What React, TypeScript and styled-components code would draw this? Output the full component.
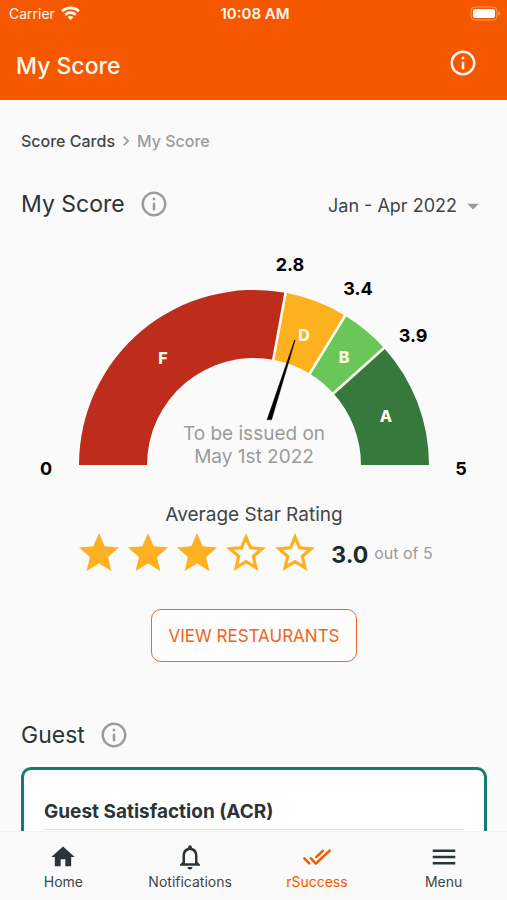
import React from "react";
import styled, { createGlobalStyle } from "styled-components";
import {
  MdArrowDropDown,
  MdChevronRight,
  MdHome,
  MdMenu,
  MdOutlineInfo,
  MdOutlineNotifications,
  MdStar,
  MdStarBorder,
} from "react-icons/md";

const color = {
  orange: "#f55800",
  ink: "#2b3437",
  text: "#3f4649",
  muted: "#9b9b9b",
  page: "#fafafa",
  teal: "#137e70",
  amber: "#fdb022",
};

const GlobalStyle = createGlobalStyle`
  *, *::before, *::after { box-sizing: border-box; }
  body {
    margin: 0;
    background: ${color.page};
    color: ${color.ink};
    font-family: Inter, Roboto, sans-serif;
  }
  h1, h2, h3, p, ol, ul { margin: 0; padding: 0; font-weight: 400; }
  button, select { font: inherit; color: inherit; }
`;

const Screen = styled.div`
  display: flex;
  flex-direction: column;
  height: 100vh;
`;

const Header = styled.header`
  flex: none;
  background: ${color.orange};
  color: #fff8f0;
`;

const StatusBar = styled.div`
  display: grid;
  grid-template-columns: 1fr auto 1fr;
  align-items: center;
  height: 26px;
  padding: 0 6px 0 9px;
  font-size: 15px;
`;

const Carrier = styled.span`
  display: flex;
  align-items: center;
  gap: 6px;
  font-size: 14px;
`;

const Clock = styled.span`
  font-weight: 600;
`;

const Battery = styled.svg`
  justify-self: end;
`;

const TitleBar = styled.div`
  display: flex;
  align-items: center;
  justify-content: space-between;
  height: 74px;
  padding: 0 29px 0 16px;
`;

const Title = styled.h1`
  font-size: 23px;
  line-height: 32px;
  font-weight: 500;
  padding-top: 6px;
`;

const IconButton = styled.button<{ $tone?: string }>`
  display: flex;
  padding: 0;
  border: 0;
  background: none;
  font-size: 30px;
  color: ${(p) => p.$tone ?? "inherit"};
`;

const Content = styled.main`
  flex: 1;
  min-height: 0;
  overflow-y: auto;
  scrollbar-width: none;
  padding: 29px 20px 0 21px;
`;

const Breadcrumbs = styled.nav`
  display: flex;
  align-items: center;
  gap: 1px;
  font-size: 16px;
  line-height: 24px;
  font-weight: 500;
  color: ${color.muted};
`;

const CrumbLink = styled.a`
  color: ${color.text};
  text-decoration: none;
`;

const SectionHead = styled.div<{ $top: number }>`
  display: flex;
  align-items: center;
  justify-content: space-between;
  margin-top: ${(p) => p.$top}px;
`;

const Heading = styled.div`
  display: flex;
  align-items: center;
  gap: 14px;
`;

const SectionTitle = styled.h2`
  font-size: 23px;
  line-height: 32px;
`;

const Period = styled.div`
  display: flex;
  align-items: center;
  padding-top: 4px;
  svg { pointer-events: none; margin-left: -24px; color: ${color.muted}; }
`;

const PeriodSelect = styled.select`
  appearance: none;
  border: 0;
  background: none;
  field-sizing: content;
  padding: 0 26px 0 0;
  font-size: 18px;
  line-height: 24px;
  color: ${color.text};
`;

const GaugeSvg = styled.svg`
  display: block;
  width: 100%;
  margin-top: 30px;
  text-anchor: middle;
`;

const Grade = styled.text`
  font-size: 16px;
  font-weight: 800;
  fill: #fffbe8;
`;

const Mark = styled.text`
  font-size: 18px;
  font-weight: 700;
  fill: #000;
`;

const Note = styled.text`
  font-size: 19px;
  fill: ${color.muted};
`;

const Rating = styled.section`
  display: flex;
  flex-direction: column;
  align-items: center;
  margin-top: 23px;
`;

const RatingTitle = styled.h3`
  font-size: 19px;
  line-height: 24px;
  color: ${color.text};
`;

const RatingRow = styled.div`
  display: flex;
  align-items: center;
  margin-top: 2px;
`;

const Stars = styled.span`
  display: flex;
  gap: 1px;
  font-size: 48px;
  color: ${color.amber};
`;

const Score = styled.strong`
  margin: 4px 6px 0 12px;
  font-size: 23px;
  line-height: 32px;
  font-weight: 700;
  color: #1e2a2c;
`;

const OutOf = styled.span`
  font-size: 16px;
  color: ${color.muted};
`;

const OutlineButton = styled.button`
  margin-top: 32px;
  padding: 0 16px;
  height: 53px;
  border: 1px solid #f2652a;
  border-radius: 10px;
  background: #fdfdfd;
  font-size: 17px;
  color: #ee6420;
`;

const Card = styled.section`
  margin-top: 16px;
  padding: 30px 20px 24px;
  border: 3px solid ${color.teal};
  border-radius: 10px;
  background: #fff;
`;

const CardTitle = styled.h3`
  padding-bottom: 5px;
  border-bottom: 1px solid #dfe3e3;
  font-size: 19px;
  line-height: 24px;
  font-weight: 700;
`;

const TabBar = styled.nav`
  flex: none;
  display: grid;
  grid-template-columns: repeat(4, 1fr);
  height: 69px;
  border-top: 1px solid #f3f3f3;
  background: ${color.page};
`;

const Tab = styled.a<{ $active?: boolean }>`
  display: flex;
  flex-direction: column;
  align-items: center;
  padding-top: 10px;
  font-size: 14px;
  line-height: 20px;
  text-decoration: none;
  color: ${(p) => (p.$active ? color.orange : color.text)};
`;

const TabIcon = styled.span<{ $active?: boolean }>`
  display: flex;
  align-items: center;
  height: 30px;
  color: ${(p) => (p.$active ? color.orange : color.ink)};
`;

const WifiIcon = () => (
  <svg width="19" height="15" viewBox="0 0 19 15" fill="none" stroke="currentColor" strokeWidth="2.6" aria-hidden="true">
    <path d="M1 5.2C5.7 0.8 13.3 0.8 18 5.2" />
    <path d="M4.2 8.7C7.2 5.9 11.8 5.9 14.8 8.7" />
    <path d="M9.5 14L6.6 11.1C8.2 9.6 10.8 9.6 12.4 11.1Z" fill="currentColor" stroke="none" />
  </svg>
);

const BatteryIcon = () => (
  <Battery width="31" height="15" viewBox="0 0 31 15" aria-hidden="true">
    <rect x="1" y="1" width="26" height="13" rx="4" fill="none" stroke="#fff" strokeOpacity="0.4" />
    <rect x="3" y="3" width="22" height="9" rx="2" fill="#fff" />
    <path d="M28.5 5.5C30.6 6.2 30.6 8.8 28.5 9.5Z" fill="#fff" fillOpacity="0.45" />
  </Battery>
);

const DoubleCheckIcon = () => (
  <svg width="28" height="28" viewBox="0 0 28 28" fill="none" stroke="currentColor" strokeWidth="2.5" strokeLinecap="round" strokeLinejoin="round" aria-hidden="true">
    <path d="M1.4 15.4L6.2 20.4" />
    <path d="M8 15.4L12.8 20.6L26.6 7.6" />
    <path d="M13.2 14.2L19.8 7.8" />
  </svg>
);

const OUTER = 175;
const INNER = 107;

const point = (radius: number, deg: number) => {
  const rad = (deg * Math.PI) / 180;
  return `${(radius * Math.cos(rad)).toFixed(2)} ${(-radius * Math.sin(rad)).toFixed(2)}`;
};

const segment = (from: number, to: number) =>
  `M${point(OUTER, from)} A${OUTER} ${OUTER} 0 0 1 ${point(OUTER, to)} ` +
  `L${point(INNER, to)} A${INNER} ${INNER} 0 0 0 ${point(INNER, from)}Z`;

const grades = [
  { label: "F", from: 180, to: 79.6, fill: "#be2d1c", x: -91, y: -101 },
  { label: "D", from: 79.6, to: 58.6, fill: "#fdb11f", x: 50, y: -124 },
  { label: "B", from: 58.6, to: 42, fill: "#69c75a", x: 90, y: -102 },
  { label: "A", from: 42, to: 0, fill: "#37793d", x: 132, y: -43 },
];

const marks = [
  { label: "0", x: -208, y: 10 },
  { label: "2.8", x: 36, y: -194 },
  { label: "3.4", x: 104, y: -170 },
  { label: "3.9", x: 159, y: -123 },
  { label: "5", x: 207, y: 10 },
];

const Gauge = () => (
  <GaugeSvg viewBox="-233 -215 466 230" role="img" aria-label="Score gauge">
    {grades.map((g) => (
      <path key={g.label} d={segment(g.from, g.to)} fill={g.fill} />
    ))}
    {grades.slice(1).map((g) => (
      <path key={g.label} d={`M${point(INNER - 1, g.from)} L${point(OUTER + 1, g.from)}`} stroke="#fffdf2" strokeWidth="2.6" />
    ))}
    {grades.map((g) => (
      <Grade key={g.label} x={g.x} y={g.y}>{g.label}</Grade>
    ))}
    {marks.map((m) => (
      <Mark key={m.label} x={m.x} y={m.y}>{m.label}</Mark>
    ))}
    <path d="M40.6 -125L41.2 -124.8L17.6 -45.2L13 -45.2Z" fill="#000" stroke="#000" strokeWidth="0.4" />
    <Note x="0" y="-25">To be issued on</Note>
    <Note x="0" y="-2">May 1st 2022</Note>
  </GaugeSvg>
);

const TOTAL_STARS = [1, 2, 3, 4, 5];

export default function App() {
  return (
    <>
      <GlobalStyle />
      <Screen>
        <Header>
          <StatusBar>
            <Carrier>Carrier <WifiIcon /></Carrier>
            <Clock>10:08 AM</Clock>
            <BatteryIcon />
          </StatusBar>
          <TitleBar>
            <Title>My Score</Title>
            <IconButton aria-label="About this page"><MdOutlineInfo /></IconButton>
          </TitleBar>
        </Header>

        <Content>
          <Breadcrumbs aria-label="Breadcrumb">
            <CrumbLink href="#score-cards">Score Cards</CrumbLink>
            <MdChevronRight size={20} />
            <span>My Score</span>
          </Breadcrumbs>

          <SectionHead $top={35}>
            <Heading>
              <SectionTitle>My Score</SectionTitle>
              <IconButton $tone={color.muted} aria-label="About my score"><MdOutlineInfo /></IconButton>
            </Heading>
            <Period>
              <PeriodSelect aria-label="Period" defaultValue="2022-1">
                <option value="2022-1">Jan - Apr 2022</option>
              </PeriodSelect>
              <MdArrowDropDown size={28} />
            </Period>
          </SectionHead>

          <Gauge />

          <Rating>
            <RatingTitle>Average Star Rating</RatingTitle>
            <RatingRow>
              <Stars role="img" aria-label="3 of 5 stars">
                {TOTAL_STARS.map((n) => (n <= 3 ? <MdStar key={n} /> : <MdStarBorder key={n} />))}
              </Stars>
              <Score>3.0</Score>
              <OutOf>out of 5</OutOf>
            </RatingRow>
            <OutlineButton>VIEW RESTAURANTS</OutlineButton>
          </Rating>

          <SectionHead $top={57}>
            <Heading>
              <SectionTitle>Guest</SectionTitle>
              <IconButton $tone={color.muted} aria-label="About guest score"><MdOutlineInfo /></IconButton>
            </Heading>
          </SectionHead>
          <Card>
            <CardTitle>Guest Satisfaction (ACR)</CardTitle>
          </Card>
        </Content>

        <TabBar aria-label="Main">
          <Tab href="#home"><TabIcon><MdHome size={28} /></TabIcon>Home</Tab>
          <Tab href="#notifications"><TabIcon><MdOutlineNotifications size={30} /></TabIcon>Notifications</Tab>
          <Tab href="#rsuccess" $active aria-current="page"><TabIcon $active><DoubleCheckIcon /></TabIcon>rSuccess</Tab>
          <Tab href="#menu"><TabIcon><MdMenu size={30} /></TabIcon>Menu</Tab>
        </TabBar>
      </Screen>
    </>
  );
}
